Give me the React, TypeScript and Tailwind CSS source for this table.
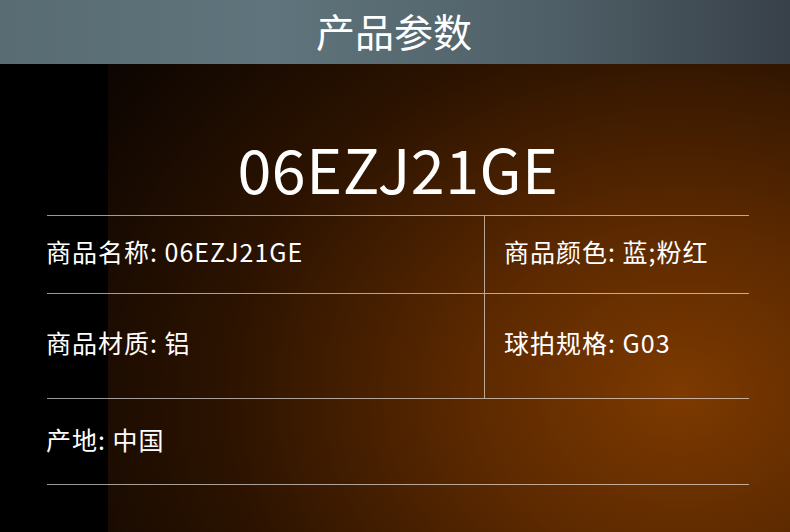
// Product parameter sheet: header bar, model title, parameter grid

const rows: { left: string; right?: string; h: string }[] = [
  { left: '商品名称: 06EZJ21GE', right: '商品颜色: 蓝;粉红', h: 'h-[78px]' },
  { left: '商品材质: 铝', right: '球拍规格: G03', h: 'h-[105px]' },
  { left: '产地: 中国', h: 'h-[86px]' },
];

export default function App() {
  return (
    <div
      className="w-[790px] h-[532px] overflow-hidden text-white"
      style={{ fontFamily: '"Noto Sans CJK SC", "Noto Sans", sans-serif' }}
    >
      <div className="h-[64px] flex items-center justify-center bg-[linear-gradient(to_right,#596c74_0%,#5f747c_35%,#4f5f67_70%,#384149_100%)]">
        <h1 className="text-[39px] leading-none pb-[4px] pr-[2px]">产品参数</h1>
      </div>

      <div className="h-[468px] pl-[47px] pr-[41px] bg-[linear-gradient(to_right,#000_108px,transparent_108px),radial-gradient(ellipse_700px_560px_at_680px_330px,#7d3a00_0%,#5c2900_30%,#2c1300_65%,#0c0502_100%)]">
        <div className="h-[151px] flex items-center justify-center">
          <div className="text-[61px] leading-none tracking-[0.5px] pt-[56px]">06EZJ21GE</div>
        </div>

        <div className="border-t border-white/60">
          {rows.map((row, i) => (
            <div key={i} className={`flex border-b border-white/60 ${row.h}`}>
              {row.right !== undefined ? (
                <>
                  <div className="w-[438px] flex items-center pb-[6px] border-r border-white/60 text-[25px] tracking-[1px]">
                    <span className="-ml-[1px]">{row.left}</span>
                  </div>
                  <div className="flex-1 flex items-center pb-[6px] pl-[19px] text-[25px] tracking-[1px]">{row.right}</div>
                </>
              ) : (
                <div className="flex-1 flex items-center pb-[4px] text-[25px] tracking-[1px]">
                  <span className="-ml-[1px]">{row.left}</span>
                </div>
              )}
            </div>
          ))}
        </div>
      </div>
    </div>
  );
}
